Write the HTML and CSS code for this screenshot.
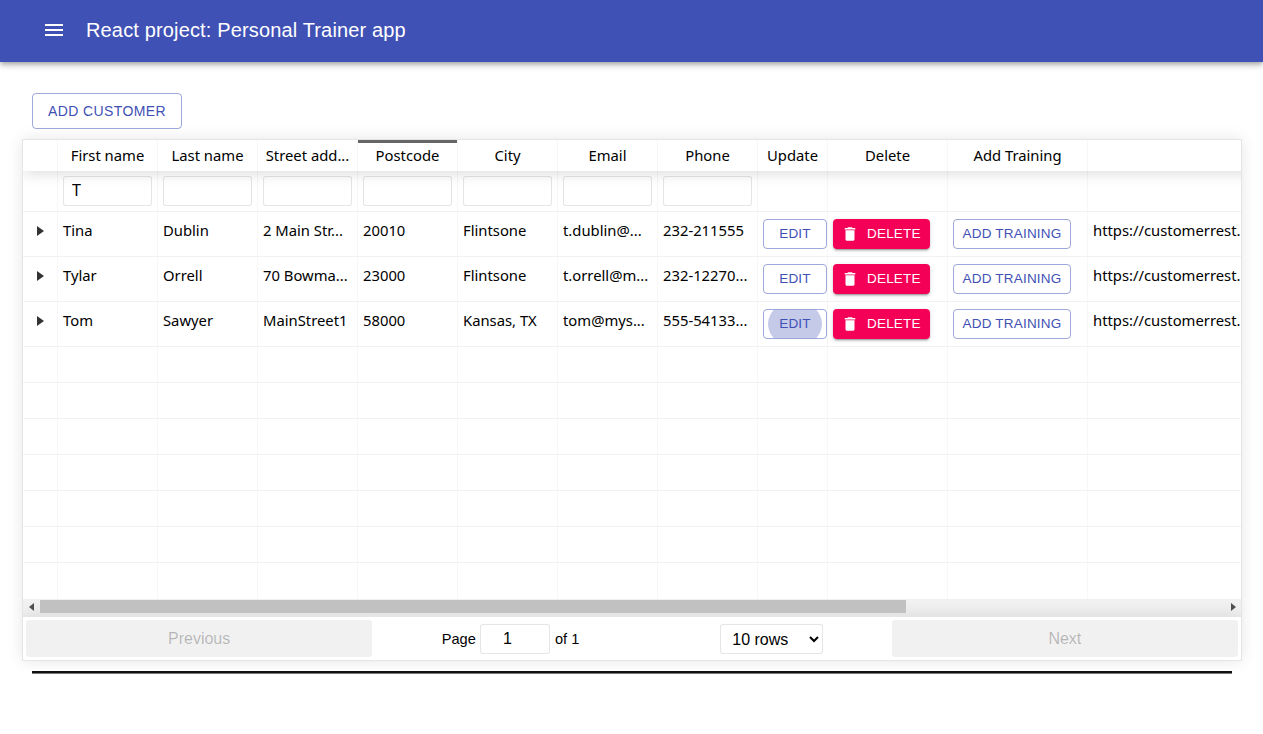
FILE: index.html
```html
<!DOCTYPE html>
<html>
<head>
  <title>Personal Trainer</title>
  <link rel="stylesheet" href="styles.css">
</head>
<body>
  <header class="appbar">
    <svg class="menu-icon" viewBox="0 0 24 24" width="24" height="24"><path d="M3 18h18v-2H3v2zm0-5h18v-2H3v2zm0-7v2h18V6H3z"/></svg>
    <div class="app-title">React project: Personal Trainer app</div>
  </header>

  <div class="toolbar">
    <button class="btn btn-outline btn-add">Add customer</button>
  </div>

  <div class="rt-table">
    <div class="rt-scroll">
      <div class="rt-head">
        <div class="cell c-exp"></div>
        <div class="cell c-100 center">First name</div>
        <div class="cell c-100 center">Last name</div>
        <div class="cell c-100 center">Street add...</div>
        <div class="cell c-100 center sorted">Postcode</div>
        <div class="cell c-100 center">City</div>
        <div class="cell c-100 center">Email</div>
        <div class="cell c-100 center">Phone</div>
        <div class="cell c-update center">Update</div>
        <div class="cell c-delete center">Delete</div>
        <div class="cell c-training center">Add Training</div>
        <div class="cell c-link"></div>
      </div>

      <div class="rt-filter">
        <div class="cell c-exp"></div>
        <div class="cell c-100"><input class="filter-input" type="text" value="T"></div>
        <div class="cell c-100"><input class="filter-input" type="text"></div>
        <div class="cell c-100"><input class="filter-input" type="text"></div>
        <div class="cell c-100"><input class="filter-input" type="text"></div>
        <div class="cell c-100"><input class="filter-input" type="text"></div>
        <div class="cell c-100"><input class="filter-input" type="text"></div>
        <div class="cell c-100"><input class="filter-input" type="text"></div>
        <div class="cell c-update"></div>
        <div class="cell c-delete"></div>
        <div class="cell c-training"></div>
        <div class="cell c-link"></div>
      </div>

      <div class="rt-row">
        <div class="cell c-exp"><span class="expander"></span></div>
        <div class="cell c-100">Tina</div>
        <div class="cell c-100">Dublin</div>
        <div class="cell c-100">2 Main Str...</div>
        <div class="cell c-100">20010</div>
        <div class="cell c-100">Flintsone</div>
        <div class="cell c-100">t.dublin@...</div>
        <div class="cell c-100">232-211555</div>
        <div class="cell c-update"><button class="btn btn-small btn-outline btn-edit">Edit</button></div>
        <div class="cell c-delete"><button class="btn btn-small btn-delete"><svg viewBox="0 0 24 24" width="18" height="18"><path d="M6 19c0 1.100.9 2 2 2h8c1.100 0 2-.9 2-2V7H6v12zM19 4h-3.500l-1-1h-5l-1 1H5v2h14V4z"/></svg>Delete</button></div>
        <div class="cell c-training"><button class="btn btn-small btn-outline btn-training">Add training</button></div>
        <div class="cell c-link">https://customerrest.</div>
      </div>

      <div class="rt-row">
        <div class="cell c-exp"><span class="expander"></span></div>
        <div class="cell c-100">Tylar</div>
        <div class="cell c-100">Orrell</div>
        <div class="cell c-100">70 Bowma...</div>
        <div class="cell c-100">23000</div>
        <div class="cell c-100">Flintsone</div>
        <div class="cell c-100">t.orrell@m...</div>
        <div class="cell c-100">232-12270...</div>
        <div class="cell c-update"><button class="btn btn-small btn-outline btn-edit">Edit</button></div>
        <div class="cell c-delete"><button class="btn btn-small btn-delete"><svg viewBox="0 0 24 24" width="18" height="18"><path d="M6 19c0 1.100.9 2 2 2h8c1.100 0 2-.9 2-2V7H6v12zM19 4h-3.500l-1-1h-5l-1 1H5v2h14V4z"/></svg>Delete</button></div>
        <div class="cell c-training"><button class="btn btn-small btn-outline btn-training">Add training</button></div>
        <div class="cell c-link">https://customerrest.</div>
      </div>

      <div class="rt-row">
        <div class="cell c-exp"><span class="expander"></span></div>
        <div class="cell c-100">Tom</div>
        <div class="cell c-100">Sawyer</div>
        <div class="cell c-100">MainStreet1</div>
        <div class="cell c-100">58000</div>
        <div class="cell c-100">Kansas, TX</div>
        <div class="cell c-100">tom@mys...</div>
        <div class="cell c-100">555-54133...</div>
        <div class="cell c-update"><button class="btn btn-small btn-outline btn-edit btn-hover"><span class="ripple"></span><span class="btn-label">Edit</span></button></div>
        <div class="cell c-delete"><button class="btn btn-small btn-delete"><svg viewBox="0 0 24 24" width="18" height="18"><path d="M6 19c0 1.100.9 2 2 2h8c1.100 0 2-.9 2-2V7H6v12zM19 4h-3.500l-1-1h-5l-1 1H5v2h14V4z"/></svg>Delete</button></div>
        <div class="cell c-training"><button class="btn btn-small btn-outline btn-training">Add training</button></div>
        <div class="cell c-link">https://customerrest.</div>
      </div>

      <div class="rt-pad"><div class="cell c-exp"></div><div class="cell c-100"></div><div class="cell c-100"></div><div class="cell c-100"></div><div class="cell c-100"></div><div class="cell c-100"></div><div class="cell c-100"></div><div class="cell c-100"></div><div class="cell c-update"></div><div class="cell c-delete"></div><div class="cell c-training"></div><div class="cell c-link"></div></div>
      <div class="rt-pad"><div class="cell c-exp"></div><div class="cell c-100"></div><div class="cell c-100"></div><div class="cell c-100"></div><div class="cell c-100"></div><div class="cell c-100"></div><div class="cell c-100"></div><div class="cell c-100"></div><div class="cell c-update"></div><div class="cell c-delete"></div><div class="cell c-training"></div><div class="cell c-link"></div></div>
      <div class="rt-pad"><div class="cell c-exp"></div><div class="cell c-100"></div><div class="cell c-100"></div><div class="cell c-100"></div><div class="cell c-100"></div><div class="cell c-100"></div><div class="cell c-100"></div><div class="cell c-100"></div><div class="cell c-update"></div><div class="cell c-delete"></div><div class="cell c-training"></div><div class="cell c-link"></div></div>
      <div class="rt-pad"><div class="cell c-exp"></div><div class="cell c-100"></div><div class="cell c-100"></div><div class="cell c-100"></div><div class="cell c-100"></div><div class="cell c-100"></div><div class="cell c-100"></div><div class="cell c-100"></div><div class="cell c-update"></div><div class="cell c-delete"></div><div class="cell c-training"></div><div class="cell c-link"></div></div>
      <div class="rt-pad"><div class="cell c-exp"></div><div class="cell c-100"></div><div class="cell c-100"></div><div class="cell c-100"></div><div class="cell c-100"></div><div class="cell c-100"></div><div class="cell c-100"></div><div class="cell c-100"></div><div class="cell c-update"></div><div class="cell c-delete"></div><div class="cell c-training"></div><div class="cell c-link"></div></div>
      <div class="rt-pad"><div class="cell c-exp"></div><div class="cell c-100"></div><div class="cell c-100"></div><div class="cell c-100"></div><div class="cell c-100"></div><div class="cell c-100"></div><div class="cell c-100"></div><div class="cell c-100"></div><div class="cell c-update"></div><div class="cell c-delete"></div><div class="cell c-training"></div><div class="cell c-link"></div></div>
      <div class="rt-pad last"><div class="cell c-exp"></div><div class="cell c-100"></div><div class="cell c-100"></div><div class="cell c-100"></div><div class="cell c-100"></div><div class="cell c-100"></div><div class="cell c-100"></div><div class="cell c-100"></div><div class="cell c-update"></div><div class="cell c-delete"></div><div class="cell c-training"></div><div class="cell c-link"></div></div>
    </div>

    <div class="scrollbar">
      <span class="arrow arrow-left"></span>
      <div class="track"><div class="thumb"></div></div>
      <span class="arrow arrow-right"></span>
    </div>

    <div class="pagination">
      <div class="page-side"><button class="page-btn" disabled>Previous</button></div>
      <div class="page-center">
        <span class="page-info">Page <input class="page-input" type="text" value="1"> of 1</span>
        <select class="page-size"><option>10 rows</option></select>
      </div>
      <div class="page-side"><button class="page-btn" disabled>Next</button></div>
    </div>
  </div>

  <hr class="divider">
</body>
</html>
```

FILE: styles.css
```css
* {
  box-sizing: border-box;
}

body {
  margin: 0;
  font-family: "Liberation Sans", sans-serif;
  background-color: white;
  color: black;
}

.appbar {
  display: flex;
  align-items: center;
  height: 62px;
  padding-left: 42px;
  padding-bottom: 2px;
  background-color: #3f51b5;
  color: white;
  box-shadow: 0 2px 4px -1px rgba(0,0,0,.2), 0 4px 5px 0 rgba(0,0,0,.14), 0 1px 10px 0 rgba(0,0,0,.12);
}

.menu-icon {
  fill: white;
  margin-right: 20px;
}

.app-title {
  font-size: 20px;
  line-height: 1.6;
  letter-spacing: .15px;
}

.toolbar {
  padding: 31px 0 10px 32px;
}

.btn {
  display: inline-flex;
  align-items: center;
  justify-content: center;
  font-family: "Liberation Sans", sans-serif;
  font-size: 14px;
  text-transform: uppercase;
  letter-spacing: .4px;
  border-radius: 4px;
  background: none;
  padding: 0 0 1px;
  cursor: pointer;
}

.btn-small {
  font-size: 13.5px;
  letter-spacing: .2px;
  padding-bottom: 2px;
}

.btn-outline {
  border: 1px solid rgba(63,81,181,.5);
  color: #3f51b5;
}

.btn-add {
  width: 150px;
  height: 36px;
}

.btn-edit {
  width: 64px;
  height: 30px;
}

.btn-training {
  width: 118px;
  height: 30px;
}

.btn-hover {
  position: relative;
  overflow: hidden;
}

.ripple {
  position: absolute;
  left: 4px;
  top: -9px;
  width: 54px;
  height: 46px;
  border-radius: 50%;
  background-color: rgba(63,81,181,.3);
}

.btn-label {
  position: relative;
}

.btn-delete {
  justify-content: flex-start;
  width: 97px;
  height: 30px;
  padding-left: 8px;
  border: none;
  background-color: #f50057;
  color: white;
  box-shadow: 0 3px 1px -2px rgba(0,0,0,.2), 0 2px 2px 0 rgba(0,0,0,.14), 0 1px 5px 0 rgba(0,0,0,.12);
}

.btn-delete svg {
  fill: white;
  margin-top: 2px;
  margin-right: 8px;
}

.rt-table {
  margin: 0 21px 0 22px;
  height: 522px;
  border: 1px solid rgba(0,0,0,.1);
  box-shadow: 0 0 15px rgba(0,0,0,.1);
  overflow: hidden;
}

.rt-scroll {
  height: 459px;
  overflow: hidden;
}

.rt-head,
.rt-filter,
.rt-row,
.rt-pad {
  display: flex;
  width: 1700px;
  font-family: "Noto Sans", sans-serif;
  font-size: 14.8px;
}

.rt-head {
  position: relative;
  height: 31px;
  box-shadow: 0 2px 15px 0 rgba(0,0,0,.15);
}

.rt-head .cell {
  padding-top: 4px;
}

.rt-filter {
  height: 41px;
  border-bottom: 1px solid rgba(0,0,0,.05);
}

.rt-row {
  height: 45px;
  border-bottom: 1px solid rgba(0,0,0,.05);
}

.rt-pad {
  height: 36px;
  border-bottom: 1px solid rgba(0,0,0,.05);
}

.rt-pad.last {
  border-bottom: none;
}

.cell {
  flex: none;
  padding: 5px;
  white-space: nowrap;
  overflow: hidden;
  border-right: 1px solid rgba(0,0,0,.03);
  line-height: 23px;
}

.center {
  text-align: center;
}

.sorted {
  box-shadow: inset 0 3px 0 0 rgba(0,0,0,.6);
}

.c-exp {
  width: 35px;
  text-align: center;
}

.c-100 {
  width: 100px;
}

.c-update {
  width: 70px;
}

.c-delete {
  width: 120px;
}

.c-training {
  width: 140px;
}

.c-link {
  width: 600px;
  border-right: none;
}

.rt-row .cell {
  padding-top: 7px;
}

.expander {
  display: inline-block;
  width: 0;
  height: 0;
  border-top: 5px solid transparent;
  border-bottom: 5px solid transparent;
  border-left: 7px solid rgba(0,0,0,.8);
}

.filter-input {
  display: block;
  width: 100%;
  height: 30px;
  padding: 3px 8px 5px;
  border: 1px solid rgba(0,0,0,.1);
  border-radius: 3px;
  font-family: "Noto Sans", sans-serif;
  font-size: 16px;
  outline: none;
}

.scrollbar {
  display: flex;
  align-items: flex-start;
  height: 16px;
  padding-top: 1px;
  background-color: #f1f1f1;
}

.arrow {
  flex: none;
  width: 5px;
  height: 0;
  margin-top: 3px;
  border-top: 4px solid transparent;
  border-bottom: 4px solid transparent;
}

.arrow-left {
  border-right: 5px solid #505050;
  margin-left: 6px;
  margin-right: 6px;
}

.arrow-right {
  border-left: 5px solid #505050;
  margin-left: 7px;
  margin-right: 5px;
}

.track {
  flex: 1;
  height: 13px;
}

.thumb {
  width: 866px;
  height: 100%;
  background-color: #c1c1c1;
}

.pagination {
  display: flex;
  height: 45px;
  padding: 3px;
  border-top: 2px solid rgba(0,0,0,.1);
  box-shadow: 0 0 15px 0 rgba(0,0,0,.1);
}

.page-side {
  flex: 1;
}

.page-btn {
  width: 100%;
  height: 100%;
  border: none;
  border-radius: 3px;
  background-color: rgba(0,0,0,.055);
  color: rgba(0,0,0,.25);
  font-family: "Liberation Sans", sans-serif;
  font-size: 16px;
}

.page-center {
  flex: 1.5;
  display: flex;
  align-items: center;
  justify-content: space-around;
  font-size: 14.6px;
}

.page-info {
  margin-left: 1px;
}

.page-input {
  width: 70px;
  height: 30px;
  margin: 0 1px 0 0;
  padding: 5px 22px 5px 7px;
  border: 1px solid rgba(0,0,0,.1);
  border-radius: 3px;
  text-align: center;
  font-size: 16px;
  font-family: "Liberation Sans", sans-serif;
  outline: none;
}

.page-size {
  width: 103px;
  height: 30px;
  margin-left: 4px;
  padding: 5px 7px;
  border: 1px solid rgba(0,0,0,.1);
  border-radius: 3px;
  background-color: white;
  font-size: 16px;
  font-family: "Liberation Sans", sans-serif;
  outline: none;
}

.divider {
  height: 3px;
  margin: 10px 31px 0 32px;
  border: none;
  border-top: 2px solid #111;
  border-bottom: 1px solid #777;
}
```
